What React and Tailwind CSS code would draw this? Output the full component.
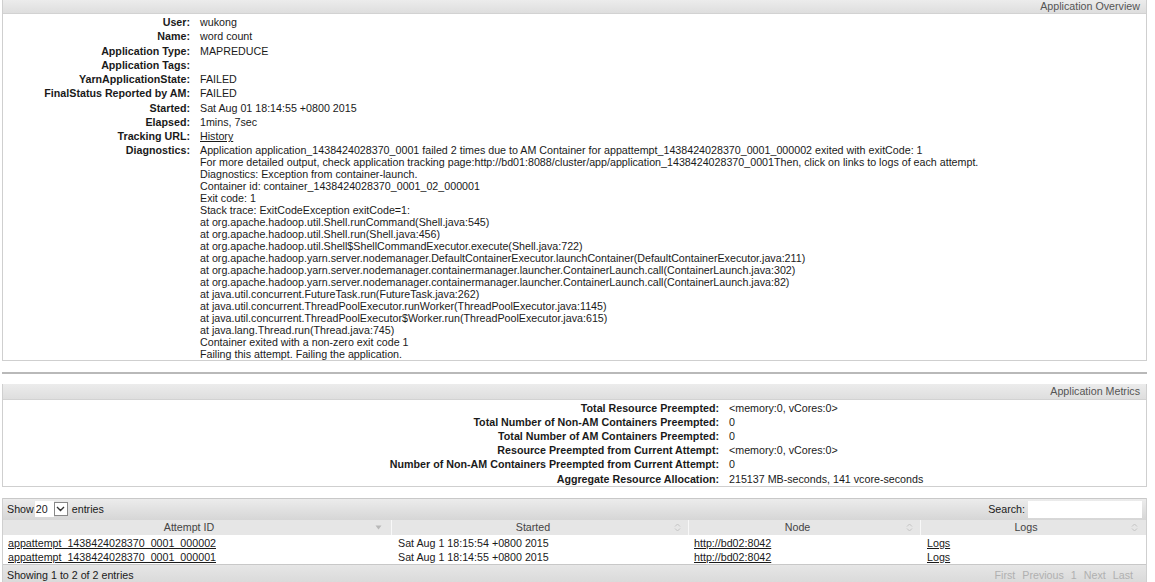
import React from 'react'

const overview = [
  ['User:', 'wukong'],
  ['Name:', 'word count'],
  ['Application Type:', 'MAPREDUCE'],
  ['Application Tags:', ''],
  ['YarnApplicationState:', 'FAILED'],
  ['FinalStatus Reported by AM:', 'FAILED'],
  ['Started:', 'Sat Aug 01 18:14:55 +0800 2015'],
  ['Elapsed:', '1mins, 7sec'],
  ['Tracking URL:', 'History', true],
]

const diagnostics = [
  'Application application_1438424028370_0001 failed 2 times due to AM Container for appattempt_1438424028370_0001_000002 exited with exitCode: 1',
  'For more detailed output, check application tracking page:http://bd01:8088/cluster/app/application_1438424028370_0001Then, click on links to logs of each attempt.',
  'Diagnostics: Exception from container-launch.',
  'Container id: container_1438424028370_0001_02_000001',
  'Exit code: 1',
  'Stack trace: ExitCodeException exitCode=1:',
  'at org.apache.hadoop.util.Shell.runCommand(Shell.java:545)',
  'at org.apache.hadoop.util.Shell.run(Shell.java:456)',
  'at org.apache.hadoop.util.Shell$ShellCommandExecutor.execute(Shell.java:722)',
  'at org.apache.hadoop.yarn.server.nodemanager.DefaultContainerExecutor.launchContainer(DefaultContainerExecutor.java:211)',
  'at org.apache.hadoop.yarn.server.nodemanager.containermanager.launcher.ContainerLaunch.call(ContainerLaunch.java:302)',
  'at org.apache.hadoop.yarn.server.nodemanager.containermanager.launcher.ContainerLaunch.call(ContainerLaunch.java:82)',
  'at java.util.concurrent.FutureTask.run(FutureTask.java:262)',
  'at java.util.concurrent.ThreadPoolExecutor.runWorker(ThreadPoolExecutor.java:1145)',
  'at java.util.concurrent.ThreadPoolExecutor$Worker.run(ThreadPoolExecutor.java:615)',
  'at java.lang.Thread.run(Thread.java:745)',
  'Container exited with a non-zero exit code 1',
  'Failing this attempt. Failing the application.',
]

const metrics = [
  ['Total Resource Preempted:', '<memory:0, vCores:0>'],
  ['Total Number of Non-AM Containers Preempted:', '0'],
  ['Total Number of AM Containers Preempted:', '0'],
  ['Resource Preempted from Current Attempt:', '<memory:0, vCores:0>'],
  ['Number of Non-AM Containers Preempted from Current Attempt:', '0'],
  ['Aggregate Resource Allocation:', '215137 MB-seconds, 141 vcore-seconds'],
]

const attempts = [
  ['appattempt_1438424028370_0001_000002', 'Sat Aug 1 18:15:54 +0800 2015'],
  ['appattempt_1438424028370_0001_000001', 'Sat Aug 1 18:14:55 +0800 2015'],
]

function SortBoth() {
  return (
    <svg width="7" height="9" viewBox="0 0 7 9" className="shrink-0">
      <path d="M1 3.5 L3.5 1 L6 3.5 M1 5.5 L3.5 8 L6 5.5" fill="none" stroke="#c4c4c4" strokeWidth="1" />
    </svg>
  )
}

function SortDesc() {
  return (
    <svg width="7" height="5" viewBox="0 0 7 5" className="shrink-0">
      <path d="M0.5 0.5 L6.5 0.5 L3.5 4.5 Z" fill="#b8b8b8" />
    </svg>
  )
}

function PanelHeader({ title, tall }) {
  return (
    <div
      className={`flex items-center justify-end border-b border-[#d2d2d2] bg-linear-to-b from-[#ececec] to-[#dedede] pr-[6px] text-[#555] ${tall ? 'h-[16px]' : 'h-[14px]'}`}
    >
      {title}
    </div>
  )
}

export default function App() {
  return (
    <div
      className="min-h-[582px] w-[1155px] overflow-hidden bg-white text-[10.7px] text-[#1a1a1a]"
      style={{ fontFamily: '"Liberation Sans", Arial, sans-serif' }}
    >
      {/* overview */}
      <section className="ml-[2px] w-[1145px] border-x border-b border-[#cfcfcf]">
        <PanelHeader title="Application Overview" />
        <table className="mt-px border-collapse">
          <tbody>
            {overview.map(([label, value, link]) => (
              <tr key={label} className="h-[14.3px] leading-[14.3px]">
                <th className="w-[197px] whitespace-nowrap p-0 pr-[10px] text-right align-top font-bold">{label}</th>
                <td className="p-0 whitespace-nowrap">{link ? <span className="underline">{value}</span> : value}</td>
              </tr>
            ))}
            <tr>
              <th className="w-[197px] whitespace-nowrap p-0 pr-[10px] text-right align-top font-bold leading-[12px]">Diagnostics:</th>
              <td className="p-0 leading-[12px]">
                {diagnostics.map((line, i) => (
                  <div key={i} className="whitespace-nowrap">{line}</div>
                ))}
              </td>
            </tr>
          </tbody>
        </table>
      </section>

      <div className="ml-[2px] mt-[11px] h-[2px] w-[1145px] bg-[#b9b9b9]" />

      {/* metrics */}
      <section className="ml-[2px] mt-[10px] w-[1145px] border-x border-b border-[#cfcfcf]">
        <PanelHeader title="Application Metrics" tall />
        <table className="mt-px border-collapse">
          <tbody>
            {metrics.map(([label, value]) => (
              <tr key={label} className="h-[14.2px] leading-[14.2px]">
                <th className="w-[726px] whitespace-nowrap p-0 pr-[10px] text-right font-bold">{label}</th>
                <td className="p-0 whitespace-nowrap">{value}</td>
              </tr>
            ))}
          </tbody>
        </table>
      </section>

      {/* attempts table */}
      <section className="ml-[2px] mt-[11px] w-[1145px] border-x border-[#cfcfcf]">
        <div className="flex h-[22px] items-center justify-between border-t border-[#c8c8c8] bg-linear-to-b from-[#ececec] to-[#d6d6d6] pl-[4px] pr-[4px]">
          <div className="flex items-center">
            <span>Show</span>
            <span className="ml-px flex h-[16px] w-[19px] items-center bg-white pl-px">20</span>
            <span className="flex h-[14px] w-[14px] items-center justify-center border border-[#888] bg-white">
              <svg width="9" height="6" viewBox="0 0 9 6">
                <path d="M1 1 L4.5 4.5 L8 1" fill="none" stroke="#333" strokeWidth="1.4" />
              </svg>
            </span>
            <span className="ml-[4px]">entries</span>
          </div>
          <div className="flex items-center">
            <span className="mr-[3px]">Search:</span>
            <span className="h-[17px] w-[114px] bg-white" />
          </div>
        </div>

        <div className="grid grid-cols-[389px_297px_232px_1fr]">
          <div className="flex h-[15px] items-center border-r border-[#f8f8f8] bg-[#e6e6e6] pr-[9px]">
            <span className="flex-1 text-center text-[#444]">Attempt ID</span>
            <SortDesc />
          </div>
          <div className="flex h-[15px] items-center border-r border-[#f8f8f8] bg-[#e6e6e6] pr-[7px]">
            <span className="flex-1 text-center text-[#444]">Started</span>
            <SortBoth />
          </div>
          <div className="flex h-[15px] items-center border-r border-[#f8f8f8] bg-[#e6e6e6] pr-[7px]">
            <span className="flex-1 text-center text-[#444]">Node</span>
            <SortBoth />
          </div>
          <div className="flex h-[15px] items-center bg-[#e6e6e6] pr-[8px]">
            <span className="flex-1 text-center text-[#444]">Logs</span>
            <SortBoth />
          </div>

          {attempts.map(([id, started], i) => {
            const cell = `h-[14px] leading-[14px] ${i === 0 ? 'mt-px' : ''}`
            return (
              <React.Fragment key={id}>
                <div className={`${cell} pl-[5px]`}>
                  <span className="underline">{id}</span>
                </div>
                <div className={`${cell} pl-[6px]`}>{started}</div>
                <div className={`${cell} pl-[5px]`}>
                  <span className="underline">http://bd02:8042</span>
                </div>
                <div className={`${cell} pl-[6px]`}>
                  <span className="underline">Logs</span>
                </div>
              </React.Fragment>
            )
          })}
        </div>

        <div className="flex h-[21px] items-center justify-between border-t border-[#c8c8c8] bg-linear-to-b from-[#e6e6e6] to-[#d8d8d8] pl-[4px] pr-[13px] pt-px">
          <span>Showing 1 to 2 of 2 entries</span>
          <div className="flex gap-[7px] text-[#b0b0b0]">
            <span>First</span>
            <span>Previous</span>
            <span>1</span>
            <span>Next</span>
            <span>Last</span>
          </div>
        </div>
      </section>
    </div>
  )
}
